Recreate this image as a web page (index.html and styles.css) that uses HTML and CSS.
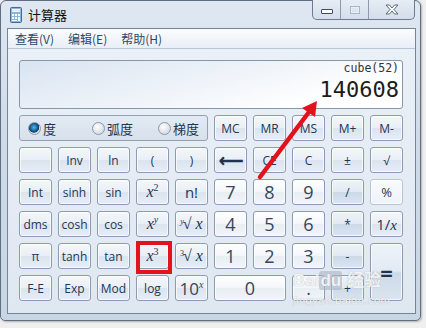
FILE: index.html
```html
<!DOCTYPE html>
<html lang="zh">
<head>
    <meta charset="UTF-8">
    <title>计算器</title>
    <link rel="stylesheet" href="styles.css">
</head>
<body>
    <div class="window">
        <div class="titlebar">
            <div class="title">
                <svg class="app-icon" width="12" height="16" viewBox="0 0 12 16">
                    <rect x="0.5" y="0.5" width="11" height="15" rx="1" fill="#8fb4d8" stroke="#3e6d9c"/>
                    <rect x="2" y="2" width="8" height="3" fill="#e9f3fb"/>
                    <rect x="2" y="7" width="2" height="2" fill="#fff"/>
                    <rect x="5" y="7" width="2" height="2" fill="#fff"/>
                    <rect x="8" y="7" width="2" height="2" fill="#fff"/>
                    <rect x="2" y="10" width="2" height="2" fill="#fff"/>
                    <rect x="5" y="10" width="2" height="2" fill="#fff"/>
                    <rect x="8" y="10" width="2" height="4" fill="#fff"/>
                    <rect x="2" y="13" width="5" height="1" fill="#fff"/>
                </svg>
                <span>计算器</span>
            </div>
            <div class="controls">
                <span class="ctl min"><i></i></span>
                <span class="ctl max"><i></i></span>
                <span class="ctl close">
                    <svg width="14" height="11" viewBox="0 0 14 11">
                        <path d="M1 1 H4.5 L7 4 L9.5 1 H13 L9 5.5 L13 10 H9.5 L7 7 L4.5 10 H1 L5 5.5 Z" fill="#fff" stroke="#5b6878" stroke-width="1"/>
                    </svg>
                </span>
            </div>
        </div>

        <div class="client">
            <div class="menubar">
                <span>查看(V)</span>
                <span>编辑(E)</span>
                <span>帮助(H)</span>
            </div>

            <div class="panel">
                <div class="display">
                    <div class="expr">cube(52)</div>
                    <div class="value">140608</div>
                </div>

                <div class="keys">
                    <div class="angle">
                        <label class="radio"><span class="dot on"></span>度</label>
                        <label class="radio"><span class="dot"></span>弧度</label>
                        <label class="radio"><span class="dot"></span>梯度</label>
                    </div>
                    <button class="k">MC</button>
                    <button class="k">MR</button>
                    <button class="k">MS</button>
                    <button class="k">M+</button>
                    <button class="k">M-</button>

                    <button class="k"></button>
                    <button class="k">Inv</button>
                    <button class="k">ln</button>
                    <button class="k">(</button>
                    <button class="k">)</button>
                    <button class="k back">&#x27F5;</button>
                    <button class="k">CE</button>
                    <button class="k">C</button>
                    <button class="k">±</button>
                    <button class="k">√</button>

                    <button class="k">Int</button>
                    <button class="k">sinh</button>
                    <button class="k">sin</button>
                    <button class="k m"><i>x</i><sup>2</sup></button>
                    <button class="k big">n!</button>
                    <button class="k num">7</button>
                    <button class="k num">8</button>
                    <button class="k num">9</button>
                    <button class="k op">/</button>
                    <button class="k light">%</button>

                    <button class="k">dms</button>
                    <button class="k">cosh</button>
                    <button class="k">cos</button>
                    <button class="k m"><i>x</i><sup><i>y</i></sup></button>
                    <button class="k m"><sup class="idx"><i>y</i></sup>√ <i>x</i></button>
                    <button class="k num">4</button>
                    <button class="k num">5</button>
                    <button class="k num">6</button>
                    <button class="k op">*</button>
                    <button class="k big">1/<i class="mi">x</i></button>

                    <button class="k">π</button>
                    <button class="k">tanh</button>
                    <button class="k">tan</button>
                    <button class="k m"><i>x</i><sup>3</sup></button>
                    <button class="k m"><sup class="idx">3</sup>√ <i>x</i></button>
                    <button class="k num">1</button>
                    <button class="k num">2</button>
                    <button class="k num">3</button>
                    <button class="k op">-</button>
                    <button class="k op equals">=</button>

                    <button class="k">F-E</button>
                    <button class="k">Exp</button>
                    <button class="k">Mod</button>
                    <button class="k">log</button>
                    <button class="k ten">10<sup><i>x</i></sup></button>
                    <button class="k num zero">0</button>
                    <button class="k num">.</button>
                    <button class="k op">+</button>
                </div>
            </div>
        </div>
    </div>

    <!-- пометки поверх скриншота -->
    <svg class="arrow" width="426" height="328" viewBox="0 0 426 328">
        <line x1="260" y1="177" x2="309" y2="112" stroke="#e2111b" stroke-width="4.5" stroke-linecap="round"/>
        <polygon points="317,101 315,117 302,108" fill="#e2111b"/>
    </svg>
    <div class="mark"></div>
    <div class="watermark">
        <div class="wm-logo">Bai<span>du</span> 经验</div>
        <div class="wm-url">jingyan.baidu.com</div>
    </div>
</body>
</html>
```

FILE: styles.css
```css
body {
    margin: 0;
    width: 426px;
    height: 328px;
    overflow: hidden;
    background-color: #efefef;
    font-family: "Open Sans", "Noto Sans", sans-serif;
    position: relative;
}

.window {
    width: 421px;
    height: 321px;
    box-sizing: border-box;
    border: 1px solid #5f6e80;
    border-radius: 6px 6px 5px 5px;
    background: linear-gradient(#dfe8f2, #cfdbe8 40%, #c8d5e3);
    padding: 0 4px 6px 6px;
    display: flex;
    flex-direction: column;
    box-shadow: 1px 1px 2px rgba(0, 0, 0, 0.25);
}

.titlebar {
    height: 27px;
    display: flex;
    justify-content: space-between;
    align-items: flex-start;
}

.title {
    display: flex;
    align-items: center;
    gap: 6px;
    height: 27px;
    padding-left: 3px;
    font-family: "Noto Sans CJK SC", sans-serif;
    font-size: 13px;
    color: #111;
}

.controls {
    display: flex;
    margin-right: 1px;
    margin-top: -1px;
    border: 1px solid #6c7b8d;
    border-top: none;
    border-radius: 0 0 5px 5px;
    overflow: hidden;
    background: linear-gradient(#e6edf5, #d3deea);
}

.ctl {
    height: 19px;
    width: 27px;
    display: flex;
    align-items: center;
    justify-content: center;
    border-left: 1px solid #8d9aab;
}

.ctl:first-child {
    border-left: none;
}

.min i {
    width: 10px;
    height: 3px;
    margin-top: 4px;
    background: #fff;
    border: 1px solid #3f4a58;
    border-radius: 1px;
}

.max i {
    width: 8px;
    height: 6px;
    border: 1px solid #aab6c4;
    box-shadow: inset 0 0 0 1px #e9eff6;
}

.close {
    width: 45px;
}

.client {
    flex: 1;
    display: flex;
    flex-direction: column;
    border: 1px solid #74849a;
    background-color: #e7eef6;
}

.menubar {
    height: 19px;
    display: flex;
    align-items: center;
    border-bottom: 1px solid #b9c6d6;
    background: linear-gradient(#fbfcfe, #e9eff7);
    font-family: "Noto Sans CJK SC", sans-serif;
    font-size: 12px;
    color: #2d4868;
}

.menubar span {
    padding: 0 7px;
}

.panel {
    flex: 1;
    padding: 11px 12px 0 11px;
    display: flex;
    flex-direction: column;
    gap: 6px;
    background: linear-gradient(#eaf0f7, #dfe7f1);
}

.display {
    height: 49px;
    box-sizing: border-box;
    border: 1px solid #8897a8;
    border-radius: 3px;
    background: linear-gradient(165deg, #d9e4f1 0%, #eef3f9 45%, #ffffff 80%);
    text-align: right;
    padding-right: 3px;
    font-family: "DejaVu Sans Mono", monospace;
    color: #222;
}

.expr {
    font-size: 11.5px;
    line-height: 14px;
    color: #333;
}

.value {
    font-size: 22px;
    line-height: 24px;
    margin-top: 3px;
    color: #1c1c1c;
}

.keys {
    display: grid;
    grid-template-columns: repeat(10, 33px);
    grid-template-rows: repeat(6, 26px);
    gap: 6px;
}

.angle {
    grid-column: span 5;
    display: grid;
    grid-template-columns: 64px 66px auto;
    align-items: center;
    padding-left: 8px;
    border: 1px solid #93a2b3;
    border-radius: 3px;
    background: linear-gradient(#e3eaf3, #d7e1ec);
    font-family: "Noto Sans CJK SC", sans-serif;
    font-size: 13px;
    color: #1e3553;
}

.radio {
    display: flex;
    align-items: center;
    gap: 2px;
}

.dot {
    width: 11px;
    height: 11px;
    border-radius: 50%;
    border: 1px solid #8e99a6;
    background: radial-gradient(circle at 40% 35%, #ffffff, #d8dde3 70%, #c4cad2);
}

.dot.on {
    background: radial-gradient(circle at 45% 40%, #5fb3e3 0, #1b6fa8 35%, #0d3e63 55%, #d8dde3 62%, #eef1f4);
}

.k {
    margin: 0;
    padding: 0;
    border: 1px solid #8b9cb2;
    border-radius: 3px;
    background: linear-gradient(#f4f7fb 0%, #e9eff6 48%, #dbe4ef 52%, #e6edf5 100%);
    font-family: "Open Sans", "Noto Sans", sans-serif;
    font-size: 12px;
    color: #1f3655;
    text-align: center;
    white-space: nowrap;
    box-shadow: inset 0 0 0 1px rgba(255, 255, 255, 0.7);
}

.num {
    font-size: 18px;
    background: linear-gradient(#fdfeff 0%, #f4f7fa 48%, #e9eef4 52%, #f2f5f9 100%);
    color: #34465c;
}

.op {
    font-size: 12px;
    background: linear-gradient(#eef3f9 0%, #e2eaf4 48%, #ccd9e8 52%, #dbe5f0 100%);
}

.light {
    border-color: #b7c4d3;
    background: linear-gradient(#f9fbfd, #eef3f8);
    font-size: 13px;
}

.big {
    font-size: 15px;
}

.back {
    font-size: 17px;
    font-weight: bold;
    color: #1e3350;
}

.mi {
    font-family: "Liberation Serif", serif;
    font-size: 15px;
}

.m {
    font-family: "Liberation Serif", serif;
    font-size: 16px;
    color: #1e3350;
}

.m sup {
    font-size: 10px;
    vertical-align: 6px;
    line-height: 0;
}

.m .idx {
    font-size: 8px;
    vertical-align: 5px;
    margin-right: -1px;
}

.ten {
    font-size: 17px;
    color: #34465c;
}

.ten sup {
    font-family: "Liberation Serif", serif;
    font-size: 10px;
    vertical-align: 7px;
    line-height: 0;
}

.equals {
    grid-row: span 2;
    font-size: 22px;
    font-weight: bold;
    color: #1e3350;
}

.zero {
    grid-column: span 2;
}

.arrow {
    position: absolute;
    left: 0;
    top: 0;
    pointer-events: none;
}

.mark {
    position: absolute;
    left: 136px;
    top: 241px;
    width: 36px;
    height: 33px;
    box-sizing: border-box;
    border: 4px solid #e3121c;
}

.watermark {
    position: absolute;
    left: 293px;
    top: 271px;
    color: rgba(255, 255, 255, 0.85);
    text-shadow: 0 0 1px #9aa4b0;
    font-family: "Liberation Sans", "Noto Sans CJK SC", sans-serif;
}

.wm-logo {
    font-size: 17px;
    font-weight: bold;
    line-height: 20px;
}

.wm-logo span {
    background: rgba(170, 180, 195, 0.6);
    border-radius: 3px;
    padding: 0 1px;
}

.wm-url {
    font-size: 11px;
    line-height: 14px;
    margin-top: 2px;
    letter-spacing: 0.5px;
}
```
